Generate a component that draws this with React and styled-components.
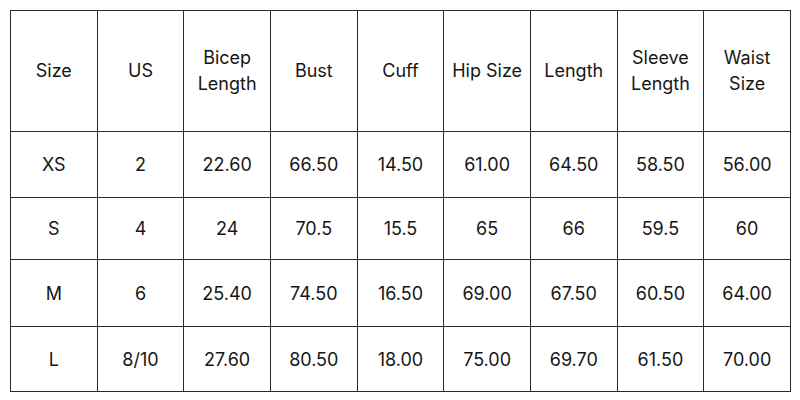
import React from "react";
import styled, { createGlobalStyle } from "styled-components";

const GlobalStyle = createGlobalStyle`
  body {
    margin: 0;
    background: #ffffff;
    font-family: "Inter", "Open Sans", sans-serif;
  }
`;

const Page = styled.div`
  width: 800px;
  height: 400px;
  padding: 10px 0 0 10px;
  box-sizing: border-box;
`;

const Table = styled.table`
  width: 781px;
  border-collapse: collapse;
  table-layout: fixed;
  border: 1.5px solid #6f6f6f;
  color: #161616;
`;

const HeadCell = styled.th`
  height: 120px;
  padding: 0 4px;
  border: 1px solid #2a2a2a;
  font-weight: 400;
  font-size: 18px;
  line-height: 26px;
  text-align: center;
`;

const Cell = styled.td`
  height: ${(p) => p.h}px;
  padding: 0;
  border: 1px solid #2a2a2a;
  font-size: 18px;
  text-align: center;
`;

const headers = [
  "Size",
  "US",
  ["Bicep", "Length"],
  "Bust",
  "Cuff",
  "Hip Size",
  "Length",
  ["Sleeve", "Length"],
  ["Waist", "Size"],
];

const rows = [
  { h: 65, cells: ["XS", "2", "22.60", "66.50", "14.50", "61.00", "64.50", "58.50", "56.00"] },
  { h: 61, cells: ["S", "4", "24", "70.5", "15.5", "65", "66", "59.5", "60"] },
  { h: 66, cells: ["M", "6", "25.40", "74.50", "16.50", "69.00", "67.50", "60.50", "64.00"] },
  { h: 64, cells: ["L", "8/10", "27.60", "80.50", "18.00", "75.00", "69.70", "61.50", "70.00"] },
];

export default function App() {
  return (
    <Page>
      <GlobalStyle />
      <Table>
        <thead>
          <tr>
            {headers.map((h, i) => (
              <HeadCell key={i}>
                {Array.isArray(h) ? (
                  <>
                    {h[0]}
                    <br />
                    {h[1]}
                  </>
                ) : (
                  h
                )}
              </HeadCell>
            ))}
          </tr>
        </thead>
        <tbody>
          {rows.map((r, i) => (
            <tr key={i}>
              {r.cells.map((c, j) => (
                <Cell key={j} h={r.h}>
                  {c}
                </Cell>
              ))}
            </tr>
          ))}
        </tbody>
      </Table>
    </Page>
  );
}
